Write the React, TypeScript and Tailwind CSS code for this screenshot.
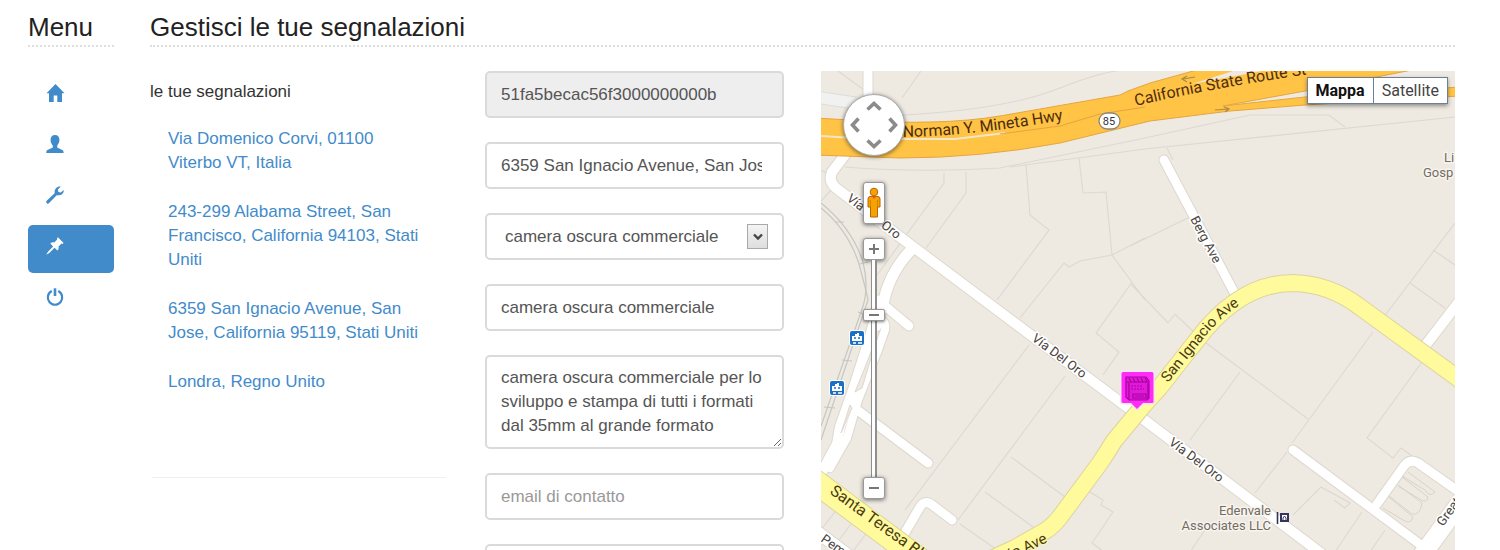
import React from "react";

type IconProps = { className?: string };

const HomeIcon = ({ className }: IconProps) => (
  <svg viewBox="0 0 18 18" className={className} fill="currentColor" aria-hidden="true">
    <path d="M9.500 0 18.500 9.300H16V18H11.300V11.600H7.700V18H3V9.300H.5L9.500 0Z" />
  </svg>
);

const UserIcon = ({ className }: IconProps) => (
  <svg viewBox="0 0 18 18" className={className} fill="currentColor" aria-hidden="true">
    <path d="M9 0C12 0 13.6 2 13.4 5.2C13.3 7.6 12.2 9.3 11.2 10.5V12.4L16.8 15.2Q17.6 15.7 17.6 18H.2Q.2 15.7 1 15.2L6.8 12.4V10.5C5.7 9.3 4.7 7.6 4.6 5.2C4.4 2 6 0 9 0Z" />
  </svg>
);

const WrenchIcon = ({ className }: IconProps) => (
  <svg viewBox="0 0 18 18" className={className} fill="currentColor" aria-hidden="true">
    <path d="M14.8.5 11.9 3.6 12.4 6 14.8 6.5 17.7 3.9C18 6.5 16.2 9 13.2 9.2L10.7 9.2 3.1 17.1C2.4 17.9 1.5 17.9.8 17.2C0 16.5 0 15.4.7 14.8L8.6 7.2V5.2C8.9 2.2 11.8-.2 14.8.5Z" />
  </svg>
);

const PinIcon = ({ className }: IconProps) => (
  <svg viewBox="0 0 18 18" className={className} fill="currentColor" aria-hidden="true">
    <path d="M11.9.2 17.6 5.9C17.1 6.6 16.2 6.9 15.3 6.7L12.5 9.6C13 11 12.5 12.6 11.5 13.6L8.5 10.8 3.3 16 .2 17.8 2 14.7 7.1 9.4 4.3 6.5C5.4 5.4 6.9 5 8.3 5.5L11.2 2.6C10.9 1.7 11.2.8 11.9.2Z" />
  </svg>
);

const PowerIcon = ({ className }: IconProps) => (
  <svg viewBox="0 0 18 18" className={className} fill="none" stroke="currentColor" aria-hidden="true">
    <path d="M5.800 3.100A7.200 7.200 0 1 0 12.200 3.100" strokeWidth="2.200" />
    <path d="M9 .3V8" strokeWidth="2.600" />
  </svg>
);

const menu = [
  { label: "Home", Icon: HomeIcon, active: false },
  { label: "Profilo", Icon: UserIcon, active: false },
  { label: "Impostazioni", Icon: WrenchIcon, active: false },
  { label: "Segnalazioni", Icon: PinIcon, active: true },
  { label: "Esci", Icon: PowerIcon, active: false },
];

const reports = [
  "Via Domenico Corvi, 01100 Viterbo VT, Italia",
  "243-299 Alabama Street, San Francisco, California 94103, Stati Uniti",
  "6359 San Ignacio Avenue, San Jose, California 95119, Stati Uniti",
  "Londra, Regno Unito",
];

const field =
  "block w-full rounded-[5px] border-2 border-[#dadada] text-[17px] text-[#555] placeholder:text-[#999] outline-none";

const parcels = [
  "M838 71 864 90M921 71 902 98M880 116Q1000 112 1060 88T1145 71",
  "M845 167Q920 173 1000 168L1145 138 1250 115 1329 115 1345 127M1010 167 1145 149 1455 117",
  "M944 173V183L872 282M966 172V193L926 248M1026 165 1030 215 1049 230 997 300M1079 158 1083 193 1106 192 1112 255 1145 300",
  "M1145 238 1112 255 1080 261 1069 267 1064 263 1020 318M1130 285 1096 333 1119 352 1103 375",
  "M1167 148 1173 160M1188 218 1130 246M1130 283 1168 323 1175 314 1202 340 1308 419",
  "M1240 372 1190 440M1373 332 1292 443M1287 452 1255 493M1422 362 1367 438 1393 458 1401 448 1412 456",
  "M1455 223 1380 322M1433 250 1455 265M1410 283 1445 308",
  "M1029 345 905 510M1065 376 958 520M1011 457 1065 497M985 492 1040 532M960 524 1000 552",
  "M1090 492 1103 500 1101 505 1113 512 1092 543 1104 552",
  "M1293 515 1321 487 1350 503 1345 508 1334 500M1362 512 1335 552M1385 530 1370 552M1205 530 1190 552",
  "M841 504 821 530M857 516 830 552M872 526 850 555",
  "M821 170 828 174M835 186 821 201",
];

const lots = [
  "M1408 472 1435 492Q1430 498 1425 490L1402 476",
  "M1402 477 1428 497Q1427 505 1418 498L1398 486",
  "M1398 485 1422 503Q1420 516 1412 514L1389 496",
  "M1389 497 1413 517Q1411 525 1403 520L1383 508",
];

type Road = { d: string; w: number };

const whiteRoads: Road[] = [
  { d: "M868 60V108", w: 9 },
  { d: "M848 151 832 172Q828 181 836 188L912 246 1135 413 1330 560", w: 10 },
  { d: "M911 250Q890 272 884 300L876 326", w: 11 },
  { d: "M878 300 909 326", w: 9 },
  { d: "M874 322 868 343 853 390 840 427 837 444 824 468 815 484", w: 10 },
  { d: "M876 322Q887 318 885 330L878 350 858 400 847 438 830 468", w: 8 },
  { d: "M848 403 928 463", w: 9 },
  { d: "M903 536 920 507Q924 500 931 504L952 520", w: 9 },
  { d: "M812 528 865 568", w: 12 },
  { d: "M1164 160 1235 294", w: 9 },
  { d: "M1425 346 1465 294", w: 10 },
  { d: "M1293 450 1425 548", w: 9 },
  { d: "M1377 504 1404 466Q1410 458 1418 463L1462 494", w: 9 },
  { d: "M1415 565 1468 492", w: 18 },
];

const yellowRoads: Road[] = [
  { d: "M805 474 821 486 907 550 950 582", w: 23 },
  {
    d: "M985 562 1015 548 1045 531Q1053 526 1060 517L1100 463Q1108 451 1114 441L1143 406 1160 387 1197 340Q1240 283 1293 283 1330 284 1360 307L1470 387",
    w: 16,
  },
];

function Roads({ roads, fill, edge }: { roads: Road[]; fill: string; edge: string }) {
  return (
    <g fill="none" strokeLinecap="round" strokeLinejoin="round">
      {roads.map((r) => (
        <path key={"e" + r.d} d={r.d} stroke={edge} strokeWidth={r.w + 2} />
      ))}
      {roads.map((r) => (
        <path key={r.d} d={r.d} stroke={fill} strokeWidth={r.w} />
      ))}
    </g>
  );
}

function Tram({ x, y }: { x: number; y: number }) {
  return (
    <g transform={`translate(${x} ${y})`}>
      <rect x="-8" y="-8" width="16" height="16" rx="3" fill="#fff" />
      <rect x="-7" y="-7" width="14" height="14" rx="2" fill="#1c6fc4" />
      <path d="M-5-2H-2V-4H0V-5H2V-2H5V3H-5Z" fill="#fff" />
      <path d="M-3 0H-1M1 0H3" stroke="#1c6fc4" strokeWidth="1.600" />
      <path d="M-4 5H-1M1 5H5" stroke="#fff" strokeWidth="1.600" />
    </g>
  );
}

function MapDrawing() {
  return (
    <svg
      viewBox="821 71 634 520"
      preserveAspectRatio="xMinYMin slice"
      className="block h-full w-full"
      role="img"
      aria-label="Mappa"
    >
      <defs>
        <path id="hwy" d="M903 137Q975 136 1075 118" />
        <path id="route" d="M1136 106Q1210 88 1330 71" />
        <path id="ignacio" d="M1168 383 1204 338Q1224 312 1252 298" />
      </defs>
      <rect x="821" y="71" width="634" height="520" fill="#eeeae2" />
      <g fill="none" stroke="#dcd8d2" strokeWidth="1.100">
        {parcels.map((d) => (
          <path key={d} d={d} />
        ))}
      </g>
      <g fill="none" stroke="#c6c6c2" strokeWidth="1.200">
        <path d="M821 203Q852 228 863 262 870 290 861 312L821 426" />
        <path d="M821 208Q848 230 859 264 866 290 868 300L821 440" />
        <path d="M836 222 844 222M860 264 868 262M858 312 866 315M842 360 852 361M824 407 835 408" />
      </g>
      <path d="M815 97 855 103" stroke="#dcdcdc" strokeWidth="13" />
      <path d="M815 97 855 103" stroke="#f1f1f0" strokeWidth="11" />
      <Roads roads={whiteRoads} fill="#fff" edge="#ddd8cf" />
      <path d="M841 433 850 405 852 408Z" fill="#eeeae2" stroke="#ddd8cf" />
      <path d="M855 392 874 345 877 338 862 388Z" fill="#eeeae2" stroke="#ddd8cf" />
      <g fill="none" stroke="#d8d3ca">
        {lots.map((d) => (
          <path key={d} d={d} />
        ))}
      </g>
      <Roads roads={yellowRoads} fill="#fffa9c" edge="#ddd3a2" />

      <path
        d="M815 118 850 120Q940 126 1000 116L1120 95 1128 91 1150 83 1204 68H1420L1407 71 1305 91 1223 106 1305 97 1460 87V96L1305 105 1230 111 1150 121 1060 143Q980 158 900 158L815 155Z"
        fill="#ffc345"
        stroke="#e5a53f"
        strokeWidth="1"
      />
      <path d="M1192 84Q1225 78 1262 71H1233L1192 84Z" fill="#eeeae2" />
      <path d="M821 136 870 139 955 139 1005 133" fill="none" stroke="#f3e6c6" strokeWidth="2" />
      <path d="M1000 134 1060 126 1100 114 1145 107" fill="none" stroke="#e5a53f" strokeWidth="1" />
      <g fill="none" stroke="#a78a4a" strokeWidth="1.200">
        <path d="M1195 77 1183 79M1187 76 1182 79 1187 82" />
        <path d="M1215 110 1229 109M1224 107 1229 109 1225 112" />
      </g>

      <g className="font-['Roboto',sans-serif]" fill="#4e2c0c" fontSize="16">
        <text>
          <textPath href="#hwy">Norman Y. Mineta Hwy</textPath>
        </text>
        <text>
          <textPath href="#route">California State Route St</textPath>
        </text>
      </g>

      <rect x="1099" y="113" width="21" height="16" rx="8" fill="#fff" stroke="#8c8676" strokeWidth="1.300" />
      <text x="1109" y="125" textAnchor="middle" fontSize="11" fill="#333" className="font-['Roboto',sans-serif]">
        85
      </text>

      <g
        className="font-['Roboto',sans-serif]"
        fill="#4a443c"
        fontSize="13"
        stroke="#fff"
        strokeWidth="3"
        strokeLinejoin="round"
        paintOrder="stroke"
      >
        <text transform="translate(846 200) rotate(38)">Vía Del Oro</text>
        <text transform="translate(1031 340) rotate(37)">Vía Del Oro</text>
        <text transform="translate(1168 444) rotate(37)">Vía Del Oro</text>
        <text transform="translate(1190 219) rotate(62)">Berg Ave</text>
        <text transform="translate(1443 527) rotate(-54)">Great</text>
        <text transform="translate(820 541) rotate(35)">Pem</text>
      </g>
      <g
        className="font-['Roboto',sans-serif]"
        fill="#4a3a12"
        stroke="#fffa9c"
        strokeWidth="2"
        strokeLinejoin="round"
        paintOrder="stroke"
        fontSize="15"
      >
        <text transform="translate(829 493) rotate(36)" fontSize="16">
          Santa Teresa Blvd
        </text>
        <text>
          <textPath href="#ignacio">San Ignacio Ave</textPath>
        </text>
        <text transform="translate(1048 542) rotate(-25)" textAnchor="end">
          San Ignacio Ave
        </text>
      </g>
      <g
        className="font-['Roboto',sans-serif]"
        fill="#746c62"
        fontSize="13"
        stroke="#f7f4ef"
        strokeWidth="3"
        strokeLinejoin="round"
        paintOrder="stroke"
      >
        <text x="1271" y="515" textAnchor="end">Edenvale</text>
        <text x="1271" y="530" textAnchor="end">Associates LLC</text>
        <text x="1444" y="162">Li</text>
        <text x="1423" y="177">Gosp</text>
      </g>
      <g fill="none" stroke="#35345c">
        <path d="M1277.500 512V524" strokeWidth="1.600" />
        <path d="M1281 514H1288V521H1281Z" strokeWidth="2" fill="#fff" />
        <path d="M1283 521V518L1284.500 516 1286 518V521" />
      </g>
      <Tram x={857} y={338} />
      <Tram x={837} y={388} />

      <g>
        <path
          d="M1123 372H1152Q1153.500 372 1153.500 373.500V402Q1153.500 403 1152 403H1143L1137 409 1131 403H1123Q1121.500 403 1121.500 402V373.500Q1121.500 372 1123 372Z"
          fill="#ff2bf6"
          stroke="#f4e6f0"
          strokeWidth="3"
          paintOrder="stroke"
        />
        <g fill="none" stroke="#a8009f" strokeWidth="1.200">
          <path d="M1126 377H1146L1149 381V398L1147 400H1129L1126 397Z" fill="#e01ad8" />
          <path d="M1127 382H1148" />
          <path d="M1129 378 1131 382M1133 378 1135 382M1137 378 1139 382M1141 378 1143 382M1145 378 1147 382" />
          <path d="M1131 386H1143M1131 389H1144" strokeDasharray="2 1" />
          <path d="M1133 394H1146V398H1133ZM1135 396H1144M1129 383V399M1148 383V399" />
        </g>
      </g>
    </svg>
  );
}

function Chevron({ className }: IconProps) {
  return (
    <svg viewBox="0 0 16 10" className={className} fill="none" stroke="#8b8b8b" strokeWidth="3.600" aria-hidden="true">
      <path d="M1.500 8.500 8 2.500 14.500 8.500" />
    </svg>
  );
}

const mapButton =
  "flex items-center justify-center rounded-[3px] border border-[#999] bg-white shadow-[0_1px_4px_rgba(0,0,0,0.55)]";

function MapPanel() {
  return (
    <section className="relative h-[520px] min-w-0 overflow-hidden bg-[#eeeae2]">
      <MapDrawing />

      <div className="absolute left-[22px] top-[23px] grid size-[62px] grid-cols-3 grid-rows-3 place-items-center rounded-full border border-[#aaa] bg-white p-[2px] shadow-[0_1px_4px_rgba(0,0,0,0.5)]">
        <button type="button" aria-label="Sposta in alto" className="col-start-2 row-start-1">
          <Chevron className="h-[10px] w-4" />
        </button>
        <button type="button" aria-label="Sposta a sinistra" className="col-start-1 row-start-2">
          <Chevron className="h-[10px] w-4 -rotate-90" />
        </button>
        <button type="button" aria-label="Sposta a destra" className="col-start-3 row-start-2">
          <Chevron className="h-[10px] w-4 rotate-90" />
        </button>
        <button type="button" aria-label="Sposta in basso" className="col-start-2 row-start-3">
          <Chevron className="h-[10px] w-4 rotate-180" />
        </button>
      </div>

      <div className="absolute left-[42px] top-[111px] flex flex-col items-center">
        <button type="button" aria-label="Street View" className={`${mapButton} mb-[14px] h-[42px] w-[22px]`}>
          <svg viewBox="0 0 14 32" className="h-8 w-[14px]" aria-hidden="true">
            <path
              d="M3 9.500H11Q13 9.500 13 12V20H10.500V30H3.500V20H1V12Q1 9.500 3 9.500Z"
              fill="#f5a300"
              stroke="#b86408"
            />
            <circle cx="7" cy="5" r="3.800" fill="#f5a300" stroke="#b86408" />
            <path d="M4.500 9 7 12 9.500 9" fill="#e4572e" />
            <path d="M3.500 13V20M10.500 13V20" stroke="#c97a08" strokeWidth="0.800" />
          </svg>
        </button>
        <button type="button" aria-label="Zoom avanti" className={`${mapButton} size-[22px]`}>
          <svg viewBox="0 0 10 10" className="size-[10px]" stroke="#777" strokeWidth="2" aria-hidden="true">
            <path d="M5 0V10M0 5H10" />
          </svg>
        </button>
        <input
          type="range"
          aria-label="Livello di zoom"
          min={0}
          max={21}
          defaultValue={16}
          className="block h-[217px] w-[22px] cursor-pointer appearance-none bg-[linear-gradient(to_right,transparent_8px,#8f8f8f_8px,#8f8f8f_9px,#fff_9px,#fff_12px,#8f8f8f_12px,#8f8f8f_14px,transparent_14px)] [direction:rtl] [writing-mode:vertical-lr] [&::-webkit-slider-thumb]:h-[12px] [&::-webkit-slider-thumb]:w-[22px] [&::-webkit-slider-thumb]:appearance-none [&::-webkit-slider-thumb]:rounded-[2px] [&::-webkit-slider-thumb]:border [&::-webkit-slider-thumb]:border-[#999] [&::-webkit-slider-thumb]:bg-white [&::-webkit-slider-thumb]:bg-[linear-gradient(#777,#777)] [&::-webkit-slider-thumb]:bg-[length:10px_2px] [&::-webkit-slider-thumb]:bg-center [&::-webkit-slider-thumb]:bg-no-repeat [&::-webkit-slider-thumb]:shadow-[0_1px_3px_rgba(0,0,0,0.5)]"
        />
        <button type="button" aria-label="Zoom indietro" className={`${mapButton} size-[22px]`}>
          <svg viewBox="0 0 10 10" className="size-[10px]" stroke="#777" strokeWidth="2" aria-hidden="true">
            <path d="M0 5H10" />
          </svg>
        </button>
      </div>

      <div className="absolute right-[7px] top-[6px] flex h-[27px] border border-[#6b7f99] bg-white font-['Roboto','Liberation_Sans',sans-serif] text-base shadow-[0_2px_4px_rgba(0,0,0,0.4)]">
        <button type="button" className="px-2 font-bold text-[#111]">
          Mappa
        </button>
        <button type="button" className="border-l border-[#6b7f99] px-2 text-[#444]">
          Satellite
        </button>
      </div>
    </section>
  );
}

export default function App() {
  return (
    <div className="grid min-h-screen grid-cols-[86px_minmax(0,1fr)] gap-x-9 bg-white pl-7 pr-[45px] pt-3 font-['Liberation_Sans',Arial,sans-serif] text-[17px] leading-6 text-[#333]">
      <nav aria-label="Menu">
        <h2 className="mb-[25px] h-[35px] border-b-2 border-dotted border-[#dedede] text-[26px] leading-[30px] text-[#222]">
          Menu
        </h2>
        <ul className="flex flex-col gap-[3px]">
          {menu.map(({ label, Icon, active }) => (
            <li key={label}>
              <a
                href="#"
                aria-label={label}
                aria-current={active ? "page" : undefined}
                className={
                  active
                    ? "block h-12 rounded-[5px] bg-[#428bca] px-[18px] py-3 text-white"
                    : "block h-12 rounded-[5px] px-[18px] py-3 text-[#428bca]"
                }
              >
                <Icon className="size-[18px] overflow-visible" />
              </a>
            </li>
          ))}
        </ul>
      </nav>

      <main className="min-w-0">
        <h1 className="mb-6 h-[35px] border-b-2 border-dotted border-[#dedede] text-[26px] leading-[30px] text-[#222]">
          Gestisci le tue segnalazioni
        </h1>
        <div className="grid grid-cols-[298fr_299fr_634fr] gap-x-[37px]">
          <section>
            <p className="pt-[9px]">le tue segnalazioni</p>
            <ul className="mt-[11px] flex flex-col gap-px">
              {reports.map((r) => (
                <li key={r}>
                  <a href="#" className="block px-[18px] py-3 text-[#428bca]">
                    {r}
                  </a>
                </li>
              ))}
            </ul>
            <hr className="mx-[2px] mt-[71px] border-[#f3efe9]" />
          </section>

          <form className="flex flex-col gap-6">
            <input
              aria-label="Codice"
              className={`${field} h-[47px] bg-[#eee] px-[14px]`}
              defaultValue="51fa5becac56f3000000000b"
              readOnly
            />
            <input
              aria-label="Indirizzo"
              className={`${field} h-[47px] bg-white pl-[14px] pr-5`}
              defaultValue="6359 San Ignacio Avenue, San Jose, California 95119, Stati Uniti"
            />
            <div className="relative">
              <select
                aria-label="Categoria"
                className={`${field} h-[47px] appearance-none bg-white pl-[18px] pr-10`}
                defaultValue="camera oscura commerciale"
              >
                <option>camera oscura commerciale</option>
              </select>
              <span className="pointer-events-none absolute right-4 top-[11px] flex h-[25px] w-[21px] items-center justify-center border border-[#a9a9a9] bg-linear-to-b from-[#f4f4f4] to-[#dedede]">
                <svg viewBox="0 0 10 8" className="h-2 w-[10px]" fill="none" stroke="#444" strokeWidth="2.400" aria-hidden="true">
                  <path d="M1 1.500 5 5.500 9 1.500" />
                </svg>
              </span>
            </div>
            <input
              aria-label="Titolo"
              className={`${field} h-[47px] bg-white px-[14px]`}
              defaultValue="camera oscura commerciale"
            />
            <textarea
              aria-label="Descrizione"
              className={`${field} h-[94px] resize overflow-hidden bg-white px-[14px] py-[9px] leading-6`}
              defaultValue="camera oscura commerciale per lo sviluppo e stampa di tutti i formati dal 35mm al grande formato"
            />
            <input
              aria-label="Email"
              type="email"
              className={`${field} h-[47px] bg-white px-[14px]`}
              placeholder="email di contatto"
            />
            <input aria-label="Telefono" type="tel" className={`${field} h-[47px] bg-white px-[14px]`} />
          </form>

          <MapPanel />
        </div>
      </main>
    </div>
  );
}
